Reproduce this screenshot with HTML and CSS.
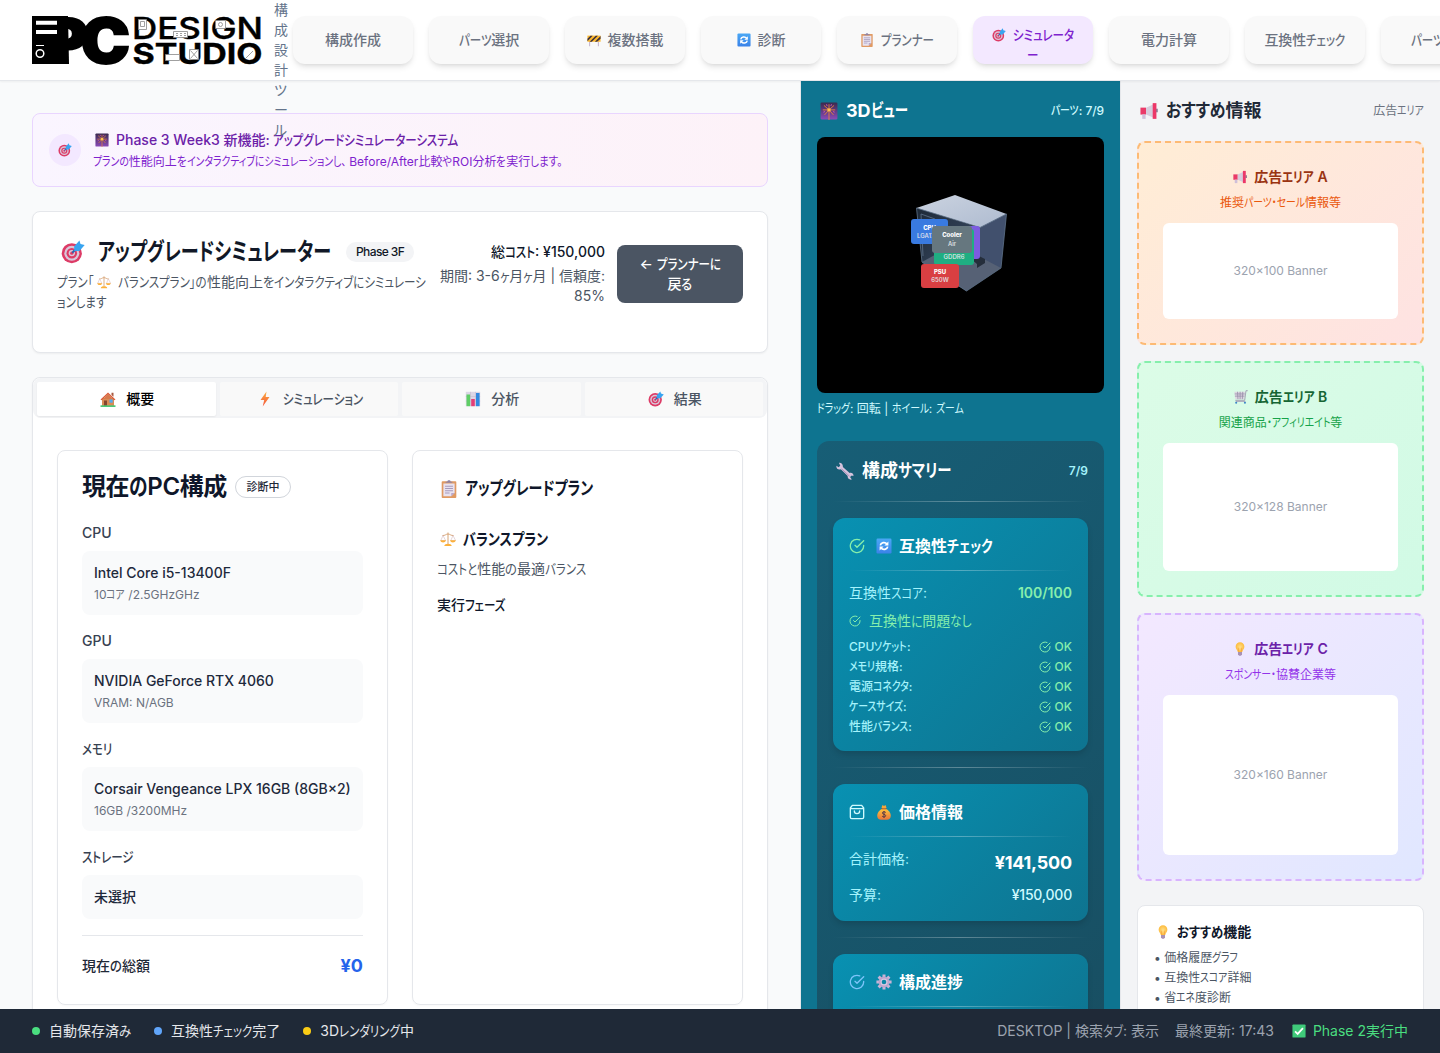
FILE: index.html
```html
<!DOCTYPE html>
<html lang="ja">
<head>
<meta charset="utf-8">
<title>PC Design Studio</title>
<link rel="stylesheet" href="styles.css">
</head>
<body>
<svg class="sprite" aria-hidden="true">
  <defs>
    <linearGradient id="g-blue" x1="0" y1="0" x2="0" y2="1"><stop offset="0" stop-color="#4aa8f5"/><stop offset="1" stop-color="#3b82e8"/></linearGradient>
    <linearGradient id="g-night" x1="0" y1="0" x2="0" y2="1"><stop offset="0" stop-color="#3a2a4e"/><stop offset="1" stop-color="#8a4bb8"/></linearGradient>
    <linearGradient id="g-bolt" x1="0" y1="0" x2="0" y2="1"><stop offset="0" stop-color="#fbb040"/><stop offset="1" stop-color="#f4523b"/></linearGradient>
    <linearGradient id="g-bag" x1="0" y1="0" x2="0" y2="1"><stop offset="0" stop-color="#ffc83d"/><stop offset="1" stop-color="#e8743b"/></linearGradient>
    <radialGradient id="g-bulb"><stop offset="0" stop-color="#ffe08a"/><stop offset="1" stop-color="#fdbb3c"/></radialGradient>
  </defs>
  <symbol id="target" viewBox="0 0 16 16"><circle cx="7.2" cy="8.8" r="6.7" fill="#dd3b66"/><circle cx="7.2" cy="8.8" r="5" fill="#d9c7da"/><circle cx="7.2" cy="8.8" r="3.5" fill="#dd3b66"/><circle cx="7.2" cy="8.8" r="2.1" fill="#d9c7da"/><circle cx="7.2" cy="8.8" r="1.1" fill="#dd3b66"/><path d="M7.5 8.5 11 5" stroke="#2563b0" stroke-width="1.2"/><path d="M8.800 7.300V4.200L12.300.4l.7 2.200 2.800.8-3.500 3.900z" fill="#38a4f0"/></symbol>
  <symbol id="firework" viewBox="0 0 16 16"><rect x=".5" y=".5" width="15" height="15" rx="1" fill="url(#g-night)"/><path d="M8 7V2M8 7v9M8 7 3.5 3M8 7l4.500-4M8 7H2.500M8 7h5.500M8 7l-4 4.500M8 7l4 4.500" stroke="#e7833f" stroke-width=".8"/><circle cx="8" cy="7" r="1.500" fill="#ffc24a"/><path d="M5.800 2l.5 1.500M10.200 2l-.5 1.500M3 9l1.500-.5M13 9l-1.500-.5" stroke="#d659b8" stroke-width=".8"/></symbol>
  <symbol id="barrier" viewBox="0 0 16 16"><path d="M3 9v6M13 9v6" stroke="#c5b3cc" stroke-width="1.200"/><rect x=".5" y="3" width="15" height="7" fill="#fdb92e"/><path d="M.5 6.500 4 3h2.500L.5 9.500zM3 10l7-7h2.500l-7 7zM9 10l6.500-6.500V6.500L11.500 10z" fill="#3b3142"/></symbol>
  <symbol id="cycle" viewBox="0 0 16 16"><rect x=".5" y=".5" width="15" height="15" rx="1.200" fill="url(#g-blue)"/><path d="M4.300 7.300C4.800 4.400 9 3.500 11 6M11.700 8.700C11.200 11.600 7 12.500 5 10" fill="none" stroke="#fff" stroke-width="1.700"/><path d="M12.400 3.600v4H8.400zM3.600 12.400v-4h4z" fill="#fff"/></symbol>
  <symbol id="clipboard" viewBox="0 0 16 16"><rect x="1.500" y="1" width="13" height="15" rx=".8" fill="#e09a63"/><path d="M3 3h10v8.500L10 14.500H3z" fill="#e8e2f0"/><path d="M10 14.500v-3h3z" fill="#b9a6c9"/><path d="M5 2.500h6v-1H9.500C9.500-.2 6.500-.2 6.500 1.500H5z" fill="#8f83a5"/><path d="M4.500 5.500h7M4.500 7.500h7M4.500 9.500h7M4.500 11.500h4" stroke="#a69abb" stroke-width=".9"/></symbol>
  <symbol id="megaphone" viewBox="0 0 16 16"><path d="M.4 5h5v6.200h-5z" fill="#ea3a68"/><path d="M5.400 5 12 2v12l-6.600-3z" fill="#d6ccdc"/><path d="M11.300 1h3.300v14h-3.300z" fill="#ec3768"/><path d="M14.600 6h1v3h-1z" fill="#65466b"/><path d="M2 11h3v4H2z" fill="#cfbfd9"/></symbol>
  <symbol id="house" viewBox="0 0 16 16"><path d="M2 7h12v8H2z" fill="#d98b55"/><path d="M.5 8.500 8 1.500l7.500 7-1 .8L8 3.400 1.500 9.300z" fill="#d95a38"/><path d="M8 3.300 3 8h10z" fill="#d77a4c"/><path d="M11.500 1.800h2v4l-2-1.800z" fill="#a85a40"/><path d="M4 9.500h3V15H4z" fill="#84462f"/><path d="M9.500 8.500h3.200v3.200H9.500z" fill="#54a9ed"/><path d="M.5 14.300h15V16H.5z" fill="#4cc776"/></symbol>
  <symbol id="bolt" viewBox="0 0 16 16"><path d="M9.500.5 3.500 9h3.700l-1.500 6.500L12.500 6H8.700z" fill="url(#g-bolt)"/></symbol>
  <symbol id="chart" viewBox="0 0 16 16"><path d="M.8.8h14.400v14.400H.8z" fill="#dcd6e6"/><path d="M.8 5.500h14.400M.8 10h14.400M5.500.8v14.400M10.500.8v14.400" stroke="#c0b7cd" stroke-width=".5"/><path d="M1.500 3.500h3.600v11.700H1.500z" fill="#5fce66"/><path d="M6.200 8h3.600v7.200H6.200z" fill="#e43d77"/><path d="M11 2h3.600v13.200H11z" fill="#3289e0"/></symbol>
  <symbol id="scales" viewBox="0 0 16 16"><path d="M8 1.500V13M2.500 4.500C5 4.800 6 3 8 3s3 1.800 5.500 1.500" stroke="#d8a577" fill="none"/><path d="M3 4.500.8 9.500h4.800zM13 4.500l-2.200 5h4.800z" fill="none" stroke="#d5b8bd" stroke-width=".6"/><path d="M.2 9.300h5.800c-.7 3-5.100 3-5.800 0zM10 9.300h5.800c-.7 3-5.100 3-5.800 0zM4.300 15c0-3 7.400-3 7.400 0z" fill="#fbb03b"/></symbol>
  <symbol id="wrench" viewBox="0 0 16 16"><path d="m2.600.7 1.200 2.600-1.500 1.300L.4 3.400C0 6 2 7.300 4.300 6.500l6.100 5.900c-.4 2 1.300 3.700 3.700 3.200l-1.500-2 .8-1.400 2.300.1c-.3-2.200-1.900-3.100-3.600-2.500L6.100 4.500C6.400 2.300 5 .5 2.600.7z" fill="#d5c3dd"/><path d="m5 6 7 6.700" stroke="#a58bb5" stroke-width=".7"/></symbol>
  <symbol id="moneybag" viewBox="0 0 16 16"><path d="M5.500 3.500 6.500 1 8 2l1.500-1 1 2.500L9.500 5h-3z" fill="#f5a73a"/><path d="M8 4.500c3 0 6.800 3.500 6.800 7.300 0 2.800-1.800 4-3.800 4H5c-2 0-3.800-1.200-3.800-4C1.200 8 5 4.500 8 4.500z" fill="url(#g-bag)"/><path d="M5.500 4.800h5" stroke="#a95435"/><path d="M9.800 8.500C9 7.400 6.400 7.500 6.400 9c0 1.600 3.300 1 3.300 2.700 0 1.500-2.700 1.600-3.600.4M8 7v7" stroke="#5b3b45" fill="none"/></symbol>
  <symbol id="gear" viewBox="0 0 16 16"><g stroke="#c9b3d6" stroke-width="3"><path d="M8 .4v15.200M.4 8h15.200M2.600 2.600l10.800 10.800M13.400 2.600 2.600 13.400"/></g><circle cx="8" cy="8" r="5.400" fill="#bba4cc"/><circle cx="8" cy="8" r="3.500" fill="#d9c7e2"/><circle cx="8" cy="8" r="2.300" fill="#0c86a6"/></symbol>
  <symbol id="cart" viewBox="0 0 16 16"><path d="M.5 2h12l-1 8.500h-10z" fill="#dcd6e0"/><path d="M.8 4.500h11.500M1 7h11M4 2l.5 8.500M7 2v8.500M10 2l-.5 8.500M15.700.8h-2l-1.500 11H1.500" fill="none" stroke="#978da8" stroke-width=".9"/><path d="M2 13h11" stroke="#a598b3"/><circle cx="2.500" cy="14.500" r="1.200" fill="#3e87c8"/><circle cx="12.500" cy="14.500" r="1.200" fill="#3e87c8"/></symbol>
  <symbol id="bulb" viewBox="0 0 16 16"><path d="M8 .3a5 5 0 0 0-5 5c0 2.700 2.200 3.700 2.500 6.200h5C10.800 9 13 8 13 5.300a5 5 0 0 0-5-5z" fill="url(#g-bulb)"/><path d="M6.500 11 6 6.500M9.500 11l.5-4.500" stroke="#f28f32" stroke-width=".6"/><path d="M5.700 11.500h4.600v2.800L9 15.800H7l-1.300-1.500z" fill="#a992b4"/></symbol>
  <symbol id="check" viewBox="0 0 16 16"><rect x=".5" y=".5" width="15" height="15" rx="1" fill="#3fca7a"/><path d="m3.500 8.300 3 3 6-6.600" fill="none" stroke="#fff" stroke-width="2"/></symbol>
  <symbol id="circle-check" viewBox="0 0 24 24"><path d="M22 11.080V12a10 10 0 1 1-5.930-9.140M22 4 12 14.010l-3-3" fill="none" stroke="currentColor" stroke-width="2" stroke-linecap="round" stroke-linejoin="round"/></symbol>
  <symbol id="bag" viewBox="0 0 24 24"><path d="M5 2h14l3 4v14a2 2 0 0 1-2 2H4a2 2 0 0 1-2-2V6zM2 7h20M16 10.500a4 4 0 0 1-8 0" fill="none" stroke="currentColor" stroke-width="2" stroke-linecap="round" stroke-linejoin="round"/></symbol>
</svg>

<header class="topbar">
  <svg class="logo" viewBox="0 0 230 48" role="img" aria-label="PC Design Studio">
    <path d="M0 0h36l1 48H0z"/>
    <text class="logo-pc" transform="translate(13 46.500) scale(1.070 1)">PC</text>
    <path d="M4 6.800h21M4 16h21" stroke="#fff" stroke-width="4"/>
    <path d="M4 29.500h8" stroke="#fff"/><circle cx="8" cy="37.500" r="3.800" fill="none" stroke="#fff" stroke-width="1.500"/>
    <text class="logo-top" x="100" y="22.700" textLength="131" lengthAdjust="spacingAndGlyphs">DESIGN</text>
    <text class="logo-bottom" x="100.500" y="47.500" textLength="130" lengthAdjust="spacingAndGlyphs">STUDIO</text>
    <g fill="#fff" stroke="#888" stroke-width=".8">
      <path d="M106.500 3.500h8v10h-8z"/><path d="M108.500 5.500h4v5h-4z"/>
      <path d="M141.500 15.500h14v6h-14zM144 17.500h2m2 0h2m2 0h2m-10 2h2m2 0h2m2 0h2"/>
      <path d="M183.500 4.500h10v8h-10z"/><circle cx="188.500" cy="8.500" r="2"/>
      <path d="M133.500 38.500h14v6h-14z"/>
      <path d="M157.500 33.500h9v10h-9zm1 1 7 8m0-8-7 8"/>
      <path d="m213 43 8-8" fill="none"/>
    </g>
  </svg>
  <div class="tagline">構成設計ツール</div>
  <nav class="nav">
    <a class="nav-item">構成作成</a>
    <a class="nav-item"><span><span class="k">パーツ</span>選択</span></a>
    <a class="nav-item"><svg class="e14"><use href="#barrier"/></svg>複数搭載</a>
    <a class="nav-item"><svg class="e14"><use href="#cycle"/></svg>診断</a>
    <a class="nav-item"><svg class="e14"><use href="#clipboard"/></svg><span class="k">プランナー</span></a>
    <a class="nav-item active"><span><svg class="e14"><use href="#target"/></svg><span class="k">シミュレータ</span><br><span class="k">ー</span></span></a>
    <a class="nav-item">電力計算</a>
    <a class="nav-item"><span>互換性<span class="k">チェック</span></span></a>
    <a class="nav-item"><span><span class="k">パーツ</span>検索</span></a>
  </nav>
</header>

<div class="body">
  <main class="main">
    <section class="notice">
      <div class="notice-icon"><svg class="e14"><use href="#target"/></svg></div>
      <div>
        <h2 class="notice-title"><svg class="e14"><use href="#firework"/></svg><span>Phase 3 Week3 新機能: <span class="k">アップグレードシミュレーターシステム</span></span></h2>
        <p class="notice-text"><span class="k">プランの</span>性能向上<span class="h">を</span><span class="k">インタラクティブにシミュレーションし、</span> Before/After比較<span class="h">や</span>ROI分析<span class="h">を</span>実行<span class="h">します。</span></p>
      </div>
    </section>

    <section class="card hero">
      <div class="hero-row">
        <div class="hero-left">
          <h1 class="hero-title"><svg class="e24"><use href="#target"/></svg><span class="k">アップグレードシミュレーター</span><span class="badge">Phase 3F</span></h1>
          <p class="hero-text"><span class="k">プラン「</span><svg class="e14"><use href="#scales"/></svg><span class="k">バランスプラン」の</span>性能向上<span class="h">を</span><span class="k">インタラクティブにシミュレーシ</span><br><span class="k">ョンします</span></p>
        </div>
        <div class="hero-meta">
          <p class="cost">総<span class="k">コスト</span>: ¥150,000</p>
          <p>期間: 3-6<span class="k">ヶ</span>月<span class="k">ヶ</span>月 | 信頼度:<br>85%</p>
        </div>
        <button class="back"><span>← <span class="k">プランナーに</span></span><span>戻<span class="h">る</span></span></button>
      </div>
    </section>

    <section class="card tabs-card">
      <div class="tabs">
        <div class="tab on"><svg class="e16"><use href="#house"/></svg>概要</div>
        <div class="tab"><svg class="e16"><use href="#bolt"/></svg><span class="k">シミュレーション</span></div>
        <div class="tab"><svg class="e16"><use href="#chart"/></svg>分析</div>
        <div class="tab"><svg class="e16"><use href="#target"/></svg>結果</div>
      </div>
      <div class="panels">
        <article class="panel">
          <h2 class="panel-head"><span>現在<span class="h">の</span>PC構成</span><span class="outline">診断中</span></h2>
          <h3 class="label">CPU</h3>
          <div class="part"><b>Intel Core i5-13400F</b><small>10<span class="k">コア</span> /2.5GHzGHz</small></div>
          <h3 class="label">GPU</h3>
          <div class="part"><b>NVIDIA GeForce RTX 4060</b><small>VRAM: N/AGB</small></div>
          <h3 class="label"><span class="k">メモリ</span></h3>
          <div class="part"><b>Corsair Vengeance LPX 16GB (8GB×2)</b><small>16GB /3200MHz</small></div>
          <h3 class="label"><span class="k">ストレージ</span></h3>
          <div class="part"><b>未選択</b></div>
          <div class="total"><span>現在<span class="h">の</span>総額</span><strong>¥0</strong></div>
        </article>
        <article class="panel">
          <h2 class="plan-head"><svg class="e18"><use href="#clipboard"/></svg><span class="k">アップグレードプラン</span></h2>
          <h3 class="plan-name"><svg class="e16"><use href="#scales"/></svg><span class="k">バランスプラン</span></h3>
          <p class="plan-text"><span class="k">コストと</span>性能<span class="h">の</span>最適<span class="k">バランス</span></p>
          <p class="plan-phase">実行<span class="k">フェーズ</span></p>
        </article>
      </div>
    </section>
  </main>

  <aside class="side">
    <div class="side-head"><svg class="e18"><use href="#firework"/></svg><h2>3D<span class="k">ビュー</span></h2><span class="count"><span class="k">パーツ</span>: 7/9</span></div>
    <svg class="viewer" viewBox="817 137 287 256">
      <defs><linearGradient id="g-top" x1="0" y1="0" x2="1" y2="1"><stop offset="0" stop-color="#cbd3e0"/><stop offset="1" stop-color="#aebbd0"/></linearGradient>
      <linearGradient id="g-side" x1="0" y1="0" x2="1" y2="1"><stop offset="0" stop-color="#1d2937"/><stop offset="1" stop-color="#42536f"/></linearGradient></defs>
      <path d="M916.500 208 980 228l-13.500 63-44.500-28z" fill="url(#g-side)"/>
      <path d="m922 262 20-11 37-4 22 21-34.500 23z" fill="#566175"/>
      <path d="m980 227 26.500-13-5.500 54-21-11z" fill="#41506d"/>
      <path d="m955 195 51.500 19-26.500 13.500-63.500-19.500z" fill="url(#g-top)"/>
      <path d="M916.500 208 922 262l44.500 29 34.500-23 5.500-54-26.500 13.500-63.500-19.500M921 214l14 5M921 214l2 42" fill="none" stroke="#60738c" stroke-width=".8"/>
      <path d="m971 259 8-3 6 3-8 5zM977 264l8-5v4l-8 5z" fill="#252e3b"/>
      <g class="tag">
        <rect x="911" y="219" width="37" height="25" rx="3" fill="#397ae0"/><text x="929.500" y="229.500">CPU</text><text x="929.500" y="238.300" class="thin">LGA1700</text>
        <rect x="952" y="226" width="28" height="33" rx="3" fill="#7c5ce0"/>
        <rect x="934" y="229" width="40" height="36" rx="3" fill="#1fae82"/><text x="954" y="259" class="thin">GDDR6</text>
        <rect x="932" y="226" width="40" height="27" rx="3" fill="#66777f"/><text x="952" y="237">Cooler</text><text x="952" y="246" class="thin">Air</text>
        <rect x="921" y="264" width="38" height="24" rx="3" fill="#d93f42"/><text x="940" y="274">PSU</text><text x="940" y="282" class="thin">650W</text>
      </g>
    </svg>
    <p class="hint"><span class="k">ドラッグ</span>: 回転 | <span class="k">ホイール</span>: <span class="k">ズーム</span></p>

    <section class="summary">
      <div class="summary-head"><svg class="e18"><use href="#wrench"/></svg><h2>構成<span class="k">サマリー</span></h2><span>7/9</span></div>
      <div class="rule"></div>
      <div class="block">
        <h3 class="block-head"><svg class="i16 green"><use href="#circle-check"/></svg><svg class="e16"><use href="#cycle"/></svg><span>互換性<span class="k">チェック</span></span></h3>
        <div class="rule"></div>
        <div class="row"><span>互換性<span class="k">スコア</span>:</span><b class="green">100/100</b></div>
        <div class="okline green"><svg class="i12"><use href="#circle-check"/></svg><span>互換性<span class="h">に</span>問題<span class="h">なし</span></span></div>
        <ul class="checks">
          <li><span>CPU<span class="k">ソケット</span>:</span><em><svg class="i12"><use href="#circle-check"/></svg>OK</em></li>
          <li><span><span class="k">メモリ</span>規格:</span><em><svg class="i12"><use href="#circle-check"/></svg>OK</em></li>
          <li><span>電源<span class="k">コネクタ</span>:</span><em><svg class="i12"><use href="#circle-check"/></svg>OK</em></li>
          <li><span><span class="k">ケースサイズ</span>:</span><em><svg class="i12"><use href="#circle-check"/></svg>OK</em></li>
          <li><span>性能<span class="k">バランス</span>:</span><em><svg class="i12"><use href="#circle-check"/></svg>OK</em></li>
        </ul>
      </div>
      <div class="rule"></div>
      <div class="block">
        <h3 class="block-head"><svg class="i16"><use href="#bag"/></svg><svg class="e16"><use href="#moneybag"/></svg>価格情報</h3>
        <div class="rule"></div>
        <div class="row"><span>合計価格:</span><b class="price">¥141,500</b></div>
        <div class="row budget"><span>予算:</span><b>¥150,000</b></div>
      </div>
      <div class="rule"></div>
      <div class="block">
        <h3 class="block-head"><svg class="i16 blue"><use href="#circle-check"/></svg><svg class="e16"><use href="#gear"/></svg>構成進捗</h3>
        <div class="rule"></div>
      </div>
    </section>
  </aside>

  <aside class="ads">
    <div class="ads-head"><svg class="e18"><use href="#megaphone"/></svg><h2><span class="h">おすすめ</span>情報</h2><span class="ads-sub">広告<span class="k">エリア</span></span></div>
    <section class="ad ad-a">
      <h3><svg class="e14"><use href="#megaphone"/></svg><span>広告<span class="k">エリア</span> A</span></h3>
      <p>推奨<span class="k">パーツ・セール</span>情報等</p>
      <div class="slot">320×100 Banner</div>
    </section>
    <section class="ad ad-b">
      <h3><svg class="e14"><use href="#cart"/></svg><span>広告<span class="k">エリア</span> B</span></h3>
      <p>関連商品<span class="k">・アフィリエイト</span>等</p>
      <div class="slot">320×128 Banner</div>
    </section>
    <section class="ad ad-c">
      <h3><svg class="e14"><use href="#bulb"/></svg><span>広告<span class="k">エリア</span> C</span></h3>
      <p><span class="k">スポンサー・</span>協賛企業等</p>
      <div class="slot">320×160 Banner</div>
    </section>
    <section class="tips">
      <h3><svg class="e14"><use href="#bulb"/></svg><span><span class="h">おすすめ</span>機能</span></h3>
      <ul>
        <li>• 価格履歴<span class="k">グラフ</span></li>
        <li>• 互換性<span class="k">スコア</span>詳細</li>
        <li>• 省<span class="k">エネ</span>度診断</li>
      </ul>
    </section>
  </aside>
</div>

<footer class="status">
  <span class="state"><i class="dot d-green"></i><span>自動保存済<span class="h">み</span></span></span>
  <span class="state"><i class="dot d-blue"></i><span>互換性<span class="k">チェック</span>完了</span></span>
  <span class="state"><i class="dot d-yellow"></i><span>3D<span class="k">レンダリング</span>中</span></span>
  <span class="info">DESKTOP | 検索<span class="k">タブ</span>: 表示</span>
  <span class="muted">最終更新: 17:43</span>
  <span class="phase"><svg class="e14"><use href="#check"/></svg>Phase 2実行中</span>
</footer>
<script src="kana.js"></script>
</body>
</html>
```
FILE: kana.js
```js
// Sets kana runs in a condensed width: the run is scaled horizontally
// and the space it gives up is taken back with a negative margin.
const runs = [...document.querySelectorAll('.k, .h')].map((el) => ({
  el,
  width: el.getBoundingClientRect().width,
  scale: parseFloat(getComputedStyle(el).getPropertyValue('--scale')),
}));
for (const { el, width, scale } of runs) {
  el.style.marginRight = `${-width * (1 - scale)}px`;
  el.style.transform = `scaleX(${scale})`;
}
```
FILE: styles.css
```css
* { box-sizing: border-box; margin: 0; padding: 0; }
body {
  height: 1053px; overflow: hidden; display: flex; flex-direction: column;
  background: #f9fafb; color: #0f172a;
  font: 14px/20px Inter, "Noto Sans CJK JP", sans-serif;
  font-feature-settings: "palt";
  white-space: nowrap;
}
ul { list-style: none; }
svg { flex: none; display: block; }
.sprite { position: absolute; width: 0; height: 0; }
.k, .h { display: inline-block; flex: none; transform-origin: 0 50%; }
.k { --scale: .82; }
.h { --scale: .88; }
.e14 { width: 14px; height: 14px; }
.e16, .i16 { width: 16px; height: 16px; }
.e18 { width: 18px; height: 18px; }
.e24 { width: 24px; height: 24px; }
.i12 { width: 12px; height: 12px; }

/* top bar */
.topbar {
  position: relative; z-index: 2; flex: none; height: 81px; display: flex; align-items: flex-start;
  padding-left: 32px; background: #fff; border-bottom: 1px solid #e5e7eb; box-shadow: 0 1px 2px rgba(0,0,0,.05);
}
.logo { width: 230px; height: 48px; margin: 16px 12px 0 0; overflow: visible; }
.logo-pc { font: 900 61.500px Inter, sans-serif; letter-spacing: -7px; stroke: #000; stroke-width: 2; }
.logo-top { font: 500 30.500px Inter, sans-serif; stroke: #000; stroke-width: .4; }
.logo-bottom { font: 700 29px Inter, sans-serif; stroke: #000; stroke-width: .4; }
.tagline { width: 14px; margin-right: 5px; color: #64748b; white-space: normal; word-break: break-all; line-break: anywhere; }
.nav { display: flex; gap: 16px; margin-top: 16px; }
.nav-item {
  width: 120px; height: 48px; flex: none; display: flex; align-items: center; justify-content: center; gap: 7px;
  border-radius: 12px; background: #f9f9f9; color: #6b7280; font-weight: 500; text-align: center;
  box-shadow: 0 4px 6px -1px rgba(0,0,0,.1), 0 2px 4px -2px rgba(0,0,0,.1);
}
.nav-item.active { padding-top: 9px; background: #f3e8ff; color: #7e22ce; }
.nav-item.active svg { display: inline-block; vertical-align: -2px; margin-right: 7px; }

.body { flex: 1; min-height: 0; display: grid; grid-template-columns: 800px 320px 320px; overflow: hidden; }
.main { padding: 32px; display: flex; flex-direction: column; gap: 24px; min-height: 0; }
.main > * { flex: none; }

/* notice */
.notice { height: 74px; display: flex; align-items: center; gap: 12px; padding: 0 16px; border: 1px solid #e9d5ff; border-radius: 8px; background: linear-gradient(90deg, #faf5ff, #fdf2f8); }
.notice-icon { width: 32px; height: 32px; border-radius: 50%; background: #f3e8ff; display: grid; place-items: center; }
.notice-title { display: flex; align-items: center; gap: 7px; padding-left: 2px; font-size: 14px; font-weight: 500; color: #6b21a8; }
.notice-text { margin-top: 4px; font-size: 12px; line-height: 16px; color: #7e22ce; }

.card { background: #fff; border: 1px solid #e5e7eb; border-radius: 8px; box-shadow: 0 1px 2px rgba(0,0,0,.05); }

/* page title */
.hero { height: 142px; padding: 24px; }
.hero-row { display: flex; align-items: center; }
.hero-left { width: 383px; }
.hero-title { display: flex; align-items: center; font-size: 24px; line-height: 32px; font-weight: 600; color: #111827; }
.hero-title .k { --scale: .755; }
.hero-title svg { margin: 0 13px 0 4px; }
.badge { margin-left: 15px; height: 20px; padding: 0 10px; border-radius: 10px; background: #f3f4f6; font-size: 12px; line-height: 20px; font-weight: 500; letter-spacing: -.6px; }
.hero-text { margin-top: 4px; color: #4b5563; }
.hero-text svg { display: inline-block; vertical-align: -2px; margin: 0 7px 0 4px; }
.hero-meta { width: 165px; text-align: right; color: #4b5563; }
.cost { margin-bottom: 4px; color: #0f172a; font-weight: 500; }
.back { width: 126px; height: 58px; margin-left: 12px; display: flex; flex-direction: column; align-items: center; justify-content: center; border: 0; border-radius: 8px; background: #4b5563; color: #fff; font: inherit; font-weight: 500; font-feature-settings: "palt"; }

/* tabs */
.tabs { height: 40px; display: grid; grid-template-columns: repeat(4, 1fr); gap: 4px; padding: 4px 4px 2px; border-radius: 8px; background: #f3f4f6; }
.tab { display: flex; align-items: center; justify-content: center; gap: 10px; padding-left: 2px; border-radius: 2px; background: #f9f9f9; color: #4b5563; font-weight: 500; }
.tab.on { background: #fff; color: #000; box-shadow: 0 1px 2px rgba(0,0,0,.06); }
.panels { display: grid; grid-template-columns: 1fr 1fr; gap: 24px; padding: 32px 24px 24px; }
.panel { height: 555px; padding: 24px; border: 1px solid #e5e7eb; border-radius: 8px; box-shadow: 0 1px 2px rgba(0,0,0,.03); }
.panel-head { display: flex; align-items: center; font-size: 24px; line-height: 24px; font-weight: 600; margin-bottom: 24px; letter-spacing: -.4px; }
.panel-head .h { --scale: .78; }
.outline { width: 56px; height: 22px; margin-left: 8px; border: 1px solid #d1d5db; border-radius: 11px; font-size: 11px; line-height: 20px; font-weight: 500; letter-spacing: 0; text-align: center; color: #1f2937; }
.label { margin-bottom: 8px; font-size: 14px; font-weight: 500; color: #374151; }
.part { display: flex; flex-direction: column; gap: 4px; margin-bottom: 16px; padding: 12px; border-radius: 8px; background: #f9fafb; }
.part b { font-weight: 500; color: #1e293b; }
.part small { font-size: 12px; line-height: 16px; color: #6b7280; }
.total { display: flex; justify-content: space-between; align-items: center; height: 45px; padding-top: 16px; border-top: 1px solid #e5e7eb; font-weight: 500; color: #1f2937; }
.total strong { font-size: 18px; line-height: 28px; font-weight: 700; color: #2563eb; }
.plan-head { display: flex; align-items: center; gap: 7px; padding-left: 3px; height: 28px; margin-bottom: 24px; font-size: 18px; font-weight: 600; }
.plan-head .k { --scale: .775; }
.plan-name { display: flex; align-items: center; gap: 7px; padding-left: 3px; height: 24px; font-size: 16px; font-weight: 600; }
.plan-text { margin: 8px 0 16px; color: #4b5563; }
.plan-phase { font-weight: 500; }

/* 3D view and summary */
.side { padding: 16px 16px 0; background: #0e7490; border-left: 1px solid #e5e7eb; overflow: hidden; }
.side-head, .ads-head, .summary-head { display: flex; align-items: center; height: 28px; }
.side-head svg, .ads-head svg, .summary-head svg { margin: 0 8px 0 3px; }
.side-head h2, .summary-head h2 { font-size: 18px; font-weight: 700; color: #fff; }
.side-head h2 .k { --scale: .75; }
.summary-head h2 .k { --scale: .8; }
.count { margin-left: auto; font-size: 12px; font-weight: 500; color: #cffafe; letter-spacing: -.1px; }
.viewer { width: 287px; height: 256px; margin-top: 12px; border-radius: 8px; background: #000; }
.tag text { font: 800 6px Inter, sans-serif; fill: #fff; text-anchor: middle; }
.tag .thin { font-weight: 500; fill: #e5e7eb; }
.hint { margin-top: 8px; font-size: 12px; line-height: 16px; color: #cffafe; }
.summary { height: 700px; margin-top: 24px; padding: 16px; border-radius: 12px; background: linear-gradient(135deg, #175e76, #184d60); }
.summary-head { margin-bottom: 16px; }
.summary-head > span { margin-left: auto; font-size: 12px; font-weight: 600; color: #a5f3fc; }
.rule { height: 1px; background: linear-gradient(90deg, transparent, rgba(255,255,255,.3), transparent); }
.block { margin: 16px 0; padding: 16px; border-radius: 12px; background: linear-gradient(135deg, #0891b2, #0e7490); box-shadow: 0 4px 6px -1px rgba(0,0,0,.15); color: #a5f3fc; }
.block .rule { margin-bottom: 12px; }
.block-head { display: flex; align-items: center; height: 24px; margin-bottom: 12px; font-size: 16px; color: #fff; }
.block-head .k { --scale: .8; }
.block-head .i16 { margin-right: 11px; color: #cffafe; }
.block-head .e16 { margin-right: 7px; }
.block .green { color: #86efac; }
.block .blue { color: #7cc4fa; }
.row { display: flex; justify-content: space-between; align-items: flex-start; margin-bottom: 8px; }
.row b { font-weight: 600; }
.row .price { font-size: 18px; line-height: 28px; font-weight: 700; letter-spacing: -.2px; color: #fff; }
.row.budget { margin-bottom: 0; }
.budget b { font-weight: 500; letter-spacing: -.2px; color: #cffafe; }
.okline { display: flex; align-items: center; gap: 8px; margin-bottom: 8px; }
.okline .h { --scale: .84; }
.checks { display: flex; flex-direction: column; gap: 4px; font-size: 12px; line-height: 16px; font-weight: 500; }
.checks li { display: flex; justify-content: space-between; }
.checks em { display: flex; align-items: center; gap: 4px; font-style: normal; color: #86efac; }

/* ads */
.ads { padding: 16px 16px 0; background: #f3f4f6; border-left: 1px solid #e5e7eb; overflow: hidden; }
.ads-head { margin-bottom: 16px; }
.ads-head h2 { font-size: 18px; font-weight: 600; color: #1f2937; }
.ads-sub { margin-left: auto; font-size: 12px; color: #6b7280; }
.ad { margin-bottom: 16px; padding: 24px; border: 2px dashed; border-radius: 8px; text-align: center; }
.ad h3 { display: flex; align-items: center; justify-content: center; gap: 7px; font-size: 14px; font-weight: 600; }
.ad p { margin: 8px 0 12px; font-size: 12px; line-height: 16px; }
.slot { display: grid; place-items: center; border-radius: 6px; background: #fff; color: #9ca3af; font-size: 12px; }
.ad-a { border-color: #fdba74; background: linear-gradient(135deg, #ffedd5, #fee2e2); color: #ea580c; }
.ad-a h3 { color: #9a3412; }
.ad-a .slot { height: 96px; }
.ad-b { border-color: #86efac; background: linear-gradient(135deg, #dcfce7, #d1fae5); color: #16a34a; }
.ad-b h3 { color: #166534; }
.ad-b .slot { height: 128px; }
.ad-c { border-color: #d8b4fe; background: linear-gradient(135deg, #f3e8ff, #e0e7ff); color: #9333ea; }
.ad-c h3 { color: #6b21a8; }
.ad-c .slot { height: 160px; }
.tips { margin-top: 24px; padding: 16px; border: 1px solid #e5e7eb; border-radius: 8px; background: #fff; height: 180px; }
.tips h3 { display: flex; align-items: center; gap: 7px; padding-left: 2px; margin-bottom: 8px; font-size: 14px; font-weight: 600; }
.tips ul { display: flex; flex-direction: column; gap: 4px; font-size: 12px; line-height: 16px; color: #4b5563; }

/* status bar */
.status { position: relative; z-index: 3; flex: none; height: 44px; display: flex; align-items: center; padding: 0 32px; background: #1f2937; color: #e5e7eb; }
.state { display: flex; align-items: center; gap: 9px; margin-right: 23px; }
.dot { width: 8px; height: 8px; border-radius: 50%; }
.d-green { background: #4ade80; }
.d-blue { background: #60a5fa; }
.d-yellow { background: #facc15; }
.info { margin-left: auto; color: #9ca3af; }
.muted { margin: 0 18px 0 16px; color: #9ca3af; }
.phase { display: flex; align-items: center; gap: 7px; color: #4ade80; }
```
